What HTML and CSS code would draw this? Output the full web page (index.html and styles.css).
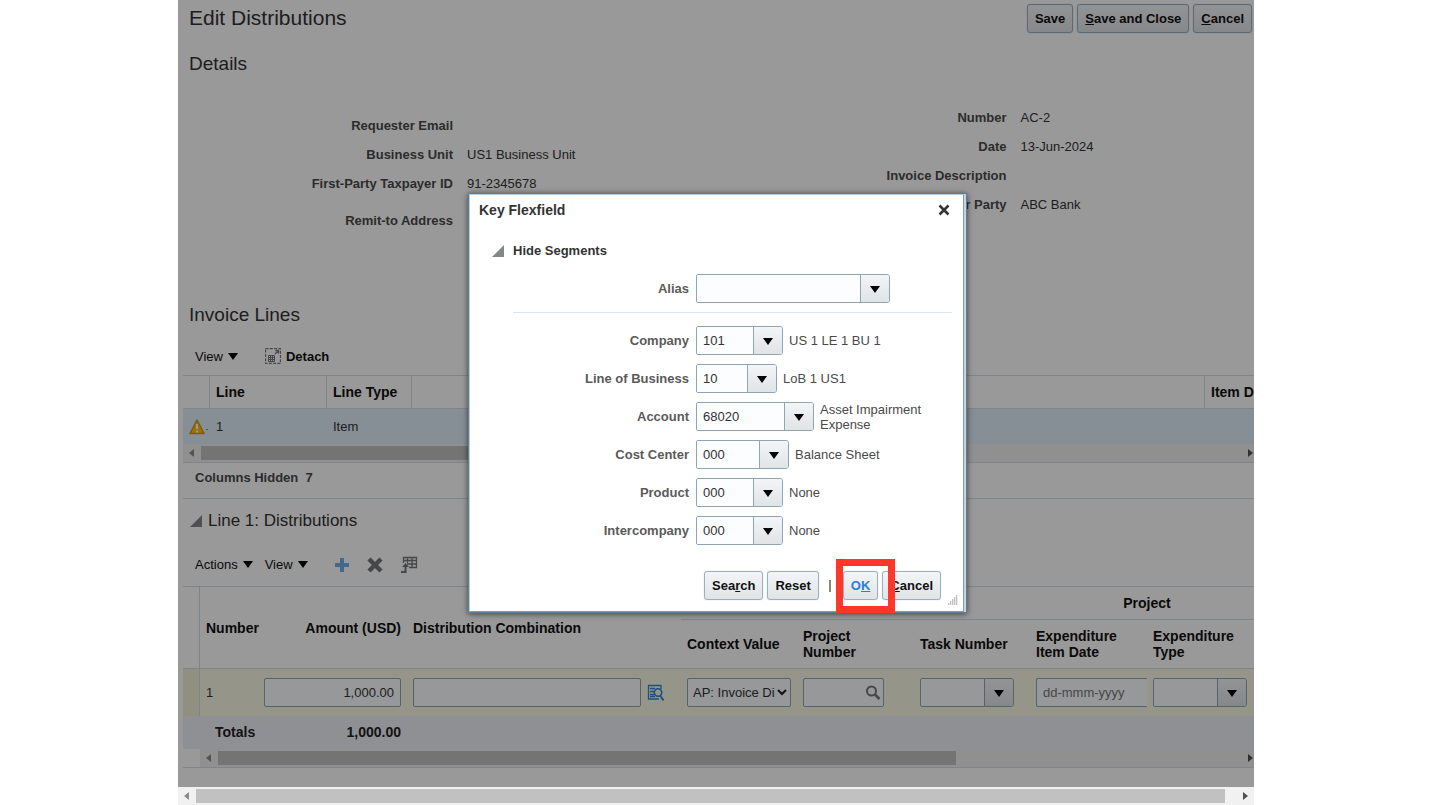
FILE: index.html
```html
<!DOCTYPE html>
<html lang="en">

<head>
    <meta charset="UTF-8">
    <meta name="viewport" content="width=device-width, initial-scale=1.0">
    <title>Edit Distributions</title>
    <link rel="stylesheet" href="styles.css">
</head>

<body>
    <svg class="sprite" aria-hidden="true">
        <symbol id="caret" viewBox="0 0 10 7"><path d="M0 0h10L5 7z" /></symbol>
        <symbol id="arrow-left" viewBox="0 0 5 8"><path d="M5 0v8L0 4z" /></symbol>
        <symbol id="arrow-right" viewBox="0 0 5 8"><path d="M0 0v8l5-4z" /></symbol>
        <symbol id="disclosure" viewBox="0 0 12 12"><path d="M12 0v12H0z" /></symbol>
    </svg>

    <div class="app">
        <div class="page">
            <header class="title-bar">
                <h1>Edit Distributions</h1>
                <div class="title-buttons">
                    <button type="button" class="btn">Save</button>
                    <button type="button" class="btn"><u>S</u>ave and Close</button>
                    <button type="button" class="btn"><u>C</u>ancel</button>
                </div>
            </header>

            <h2 class="details-title">Details</h2>
            <div class="details">
                <dl class="info info-left">
                    <dt>Requester Email</dt>
                    <dd></dd>
                    <dt>Business Unit</dt>
                    <dd>US1 Business Unit</dd>
                    <dt>First-Party Taxpayer ID</dt>
                    <dd>91-2345678</dd>
                    <dt class="tall">Remit-to Address</dt>
                    <dd class="tall"></dd>
                </dl>
                <dl class="info info-right">
                    <dt>Number</dt>
                    <dd>AC-2</dd>
                    <dt>Date</dt>
                    <dd>13-Jun-2024</dd>
                    <dt>Invoice Description</dt>
                    <dd></dd>
                    <dt>Supplier or Party</dt>
                    <dd>ABC Bank</dd>
                </dl>
            </div>

            <section class="lines">
                <h2>Invoice Lines</h2>
                <div class="toolbar lines-toolbar">
                    <button type="button" class="menu-btn">View <svg class="caret"><use href="#caret" /></svg></button>
                    <button type="button" class="menu-btn detach">
                        <svg width="16" height="16" viewBox="0 0 16 16" fill="none" stroke="#73777a">
                            <path d="M.5 .5h15v15H.5z" stroke-width="1.300" stroke-dasharray="3 1.3" />
                            <path d="M3.500 7.500h6v6h-6zM3.500 9.500h6M3.500 11.500h6M5.500 7.500v6M7.500 7.500v6" />
                            <path d="M10 6l3-3M10.500 2.500h3v3" stroke-width="1.300" />
                        </svg>
                        <b>Detach</b>
                    </button>
                </div>
                <table class="grid lines-grid">
                    <colgroup>
                        <col class="c-status">
                        <col class="c-line">
                        <col class="c-type">
                        <col>
                        <col class="c-item">
                    </colgroup>
                    <thead>
                        <tr>
                            <th></th>
                            <th>Line</th>
                            <th>Line Type</th>
                            <th></th>
                            <th class="clip">Item De</th>
                        </tr>
                    </thead>
                    <tbody>
                        <tr>
                            <td class="status">
                                <svg width="20" height="16" viewBox="0 0 20 16">
                                    <path d="M8 1L15 14.500H1z" fill="#ffc20e" stroke="#d99600" stroke-width="1.500" stroke-linejoin="round" />
                                    <path d="M8 5v5M8 11.500v2" stroke="#fff" stroke-width="2" />
                                    <path d="M17 10.500h2" stroke="#888" />
                                </svg>
                            </td>
                            <td>1</td>
                            <td>Item</td>
                            <td></td>
                            <td></td>
                        </tr>
                    </tbody>
                </table>
                <div class="scrollbar lines-scroll">
                    <svg class="arrow faded"><use href="#arrow-left" /></svg>
                    <div class="thumb"></div>
                    <svg class="arrow arrow-end"><use href="#arrow-right" /></svg>
                </div>
                <p class="hidden-columns">Columns Hidden&nbsp; 7</p>
            </section>

            <section class="distributions">
                <h3><svg class="disclosure"><use href="#disclosure" /></svg>Line 1: Distributions</h3>
                <div class="toolbar">
                    <button type="button" class="menu-btn">Actions <svg class="caret"><use href="#caret" /></svg></button>
                    <button type="button" class="menu-btn">View <svg class="caret"><use href="#caret" /></svg></button>
                    <button type="button" class="icon-btn add" aria-label="Add Row">
                        <svg width="16" height="16" viewBox="0 0 16 16"><path d="M6 1h4v5h5v4h-5v5H6v-5H1V6h5z" fill="#6fb0e8" /></svg>
                    </button>
                    <button type="button" class="icon-btn" aria-label="Delete">
                        <svg width="16" height="16" viewBox="0 0 16 16"><path d="M2 2l12 12M14 2L2 14" stroke="#73777a" stroke-width="4.500" /></svg>
                    </button>
                    <button type="button" class="icon-btn" aria-label="Detach Rows">
                        <svg width="18" height="18" viewBox="0 0 18 18" fill="none" stroke="#73777a">
                            <path d="M3.500 7V1.500h13v10H9M3.500 4.500h13M7 8h9.500M7.500 1.500V7M12 1.500v10" stroke-width="1.300" />
                            <path d="M1 16h4.500V10" stroke-width="2" />
                            <path d="M2 11l3.500-4L9 11z" fill="#73777a" stroke="none" />
                        </svg>
                    </button>
                </div>
                <table class="grid dist-grid">
                    <colgroup>
                        <col class="c-gutter">
                        <col class="c-number">
                        <col class="c-amount">
                        <col class="c-combination">
                        <col class="c-narrow">
                        <col class="c-field">
                        <col class="c-narrow">
                        <col class="c-field">
                        <col>
                    </colgroup>
                    <thead>
                        <tr class="group-row">
                            <th rowspan="2" class="gutter"></th>
                            <th rowspan="2">Number</th>
                            <th rowspan="2" class="num">Amount (USD)</th>
                            <th rowspan="2">Distribution Combination</th>
                            <th colspan="3" class="group"></th>
                            <th colspan="2" class="group project">Project</th>
                        </tr>
                        <tr class="column-row">
                            <th>Context Value</th>
                            <th>Project<br>Number</th>
                            <th>Task Number</th>
                            <th>Expenditure<br>Item Date</th>
                            <th>Expenditure<br>Type</th>
                        </tr>
                    </thead>
                    <tbody>
                        <tr>
                            <td class="gutter"></td>
                            <td>1</td>
                            <td><input type="text" class="field num" value="1,000.00" aria-label="Amount (USD)"></td>
                            <td>
                                <div class="combination">
                                    <input type="text" class="field" aria-label="Distribution Combination">
                                    <button type="button" class="icon-btn" aria-label="Select Combination">
                                        <svg width="18" height="18" viewBox="0 0 18 18" fill="none" stroke="#2e87cf">
                                            <path d="M1 1.500h13M1.500 1v14.500M1 15h11M14 1v4M3 4.500h5M3 7.500h4M3 10.500h4M3 12.500h5" stroke-width="1.300" />
                                            <circle cx="11" cy="8.500" r="3.700" stroke-width="1.600" />
                                            <path d="M13.500 12l3 4.500" stroke-width="2" />
                                        </svg>
                                    </button>
                                </div>
                            </td>
                            <td>
                                <div class="select-wrap">
                                    <select class="field" aria-label="Context Value">
                                        <option>AP: Invoice Di</option>
                                    </select>
                                    <svg width="10" height="7" viewBox="0 0 10 7"><path d="M1 1l4 4 4-4" fill="none" stroke="#222" stroke-width="2" /></svg>
                                </div>
                            </td>
                            <td>
                                <div class="search-box">
                                    <input type="text" aria-label="Project Number">
                                    <button type="button" class="icon-btn" aria-label="Search Project Number">
                                        <svg width="16" height="16" viewBox="0 0 16 16" fill="none" stroke="#73777a">
                                            <circle cx="6.500" cy="6" r="4.500" stroke-width="2" />
                                            <path d="M10 9.500l4.500 4.500" stroke-width="2.500" />
                                        </svg>
                                    </button>
                                </div>
                            </td>
                            <td>
                                <div class="combo w-task">
                                    <input type="text" aria-label="Task Number">
                                    <button type="button" aria-label="Task Number list"><svg class="caret"><use href="#caret" /></svg></button>
                                </div>
                            </td>
                            <td class="date-cell"><input type="text" class="field date" placeholder="dd-mmm-yyyy" aria-label="Expenditure Item Date"></td>
                            <td>
                                <div class="combo w-task">
                                    <input type="text" aria-label="Expenditure Type">
                                    <button type="button" aria-label="Expenditure Type list"><svg class="caret"><use href="#caret" /></svg></button>
                                </div>
                            </td>
                        </tr>
                    </tbody>
                    <tfoot>
                        <tr>
                            <td></td>
                            <td class="totals">Totals</td>
                            <td class="num">1,000.00</td>
                            <td colspan="6"></td>
                        </tr>
                    </tfoot>
                </table>
                <div class="scroll-row">
                    <div class="scrollbar dist-scroll">
                        <svg class="arrow faded"><use href="#arrow-left" /></svg>
                        <div class="thumb"></div>
                        <svg class="arrow arrow-end"><use href="#arrow-right" /></svg>
                    </div>
                </div>
            </section>

            <!-- Modal layer -->
            <div class="overlay">
                <div class="dialog" role="dialog" aria-labelledby="dialog-title">
                    <div class="dialog-body">
                        <div class="dialog-head">
                            <h4 id="dialog-title">Key Flexfield</h4>
                            <button type="button" class="icon-btn" aria-label="Close">
                                <svg width="12" height="12" viewBox="0 0 12 12"><path d="M1.500 1.500l9 9M10.500 1.500l-9 9" stroke="#333" stroke-width="2.500" /></svg>
                            </button>
                        </div>
                        <button type="button" class="segments-toggle"><svg class="disclosure"><use href="#disclosure" /></svg>Hide Segments</button>

                        <div class="segment">
                            <label for="alias">Alias</label>
                            <div class="combo w-alias">
                                <input type="text" id="alias">
                                <button type="button" aria-label="Alias list"><svg class="caret"><use href="#caret" /></svg></button>
                            </div>
                        </div>
                        <hr>
                        <div class="segment">
                            <label for="company">Company</label>
                            <div class="combo w-company">
                                <input type="text" id="company" value="101">
                                <button type="button" aria-label="Company list"><svg class="caret"><use href="#caret" /></svg></button>
                            </div>
                            <span>US 1 LE 1 BU 1</span>
                        </div>
                        <div class="segment">
                            <label for="lob">Line of Business</label>
                            <div class="combo w-lob">
                                <input type="text" id="lob" value="10">
                                <button type="button" aria-label="Line of Business list"><svg class="caret"><use href="#caret" /></svg></button>
                            </div>
                            <span>LoB 1 US1</span>
                        </div>
                        <div class="segment">
                            <label for="account">Account</label>
                            <div class="combo w-account">
                                <input type="text" id="account" value="68020">
                                <button type="button" aria-label="Account list"><svg class="caret"><use href="#caret" /></svg></button>
                            </div>
                            <span>Asset Impairment<br>Expense</span>
                        </div>
                        <div class="segment">
                            <label for="cost-center">Cost Center</label>
                            <div class="combo w-cost">
                                <input type="text" id="cost-center" value="000">
                                <button type="button" aria-label="Cost Center list"><svg class="caret"><use href="#caret" /></svg></button>
                            </div>
                            <span>Balance Sheet</span>
                        </div>
                        <div class="segment">
                            <label for="product">Product</label>
                            <div class="combo w-company">
                                <input type="text" id="product" value="000">
                                <button type="button" aria-label="Product list"><svg class="caret"><use href="#caret" /></svg></button>
                            </div>
                            <span>None</span>
                        </div>
                        <div class="segment">
                            <label for="intercompany">Intercompany</label>
                            <div class="combo w-company">
                                <input type="text" id="intercompany" value="000">
                                <button type="button" aria-label="Intercompany list"><svg class="caret"><use href="#caret" /></svg></button>
                            </div>
                            <span>None</span>
                        </div>

                        <div class="dialog-foot">
                            <button type="button" class="btn">Sea<u>r</u>ch</button>
                            <button type="button" class="btn">Reset</button>
                            <span class="divider"></span>
                            <span class="ok-wrap">
                                <button type="button" class="btn ok">O<u>K</u></button>
                                <span class="highlight"></span>
                            </span>
                            <button type="button" class="btn"><u>C</u>ancel</button>
                        </div>
                        <svg class="grip" width="11" height="11" viewBox="0 0 11 11">
                            <path d="M1 10h10M3 8h8M5 6h6M7 4h4M9 2h2" stroke="#aaa" stroke-width="1.300" stroke-dasharray="1.300 .7" />
                        </svg>
                    </div>
                </div>
            </div>
        </div>

        <div class="scrollbar page-scroll">
            <svg class="arrow faded"><use href="#arrow-left" /></svg>
            <div class="thumb"></div>
            <svg class="arrow arrow-end"><use href="#arrow-right" /></svg>
        </div>
    </div>
</body>

</html>
```

FILE: styles.css
```css
* {
    box-sizing: border-box;
}

body {
    margin: 0;
    padding: 0 178px;
    background: #fff;
    color: #333;
    font-family: "Liberation Sans", Arial, sans-serif;
    font-size: 13px;
    line-height: 15px;
}

h1,
h2,
h3,
h4,
p,
dl,
dd {
    margin: 0;
    font-weight: normal;
}

button,
input,
select {
    font: inherit;
    color: inherit;
}

svg {
    display: block;
    flex: none;
}

.sprite {
    position: absolute;
    width: 0;
    height: 0;
}

.page {
    position: relative;
    padding: 0 0 19px 5px;
    overflow: hidden;
}

/* Headings */
.title-bar {
    display: flex;
    justify-content: space-between;
    align-items: center;
    height: 36px;
    padding: 0 2px 0 6px;
}

h1 {
    font-size: 21px;
    line-height: 28px;
}

h2 {
    padding-left: 6px;
    font-size: 19px;
    line-height: 28px;
}

h3 {
    display: flex;
    align-items: center;
    gap: 6px;
    padding-left: 7px;
    font-size: 17px;
    line-height: 44px;
}

.details-title {
    margin-top: 14px;
}

.title-buttons {
    display: flex;
    gap: 4px;
}

/* Buttons */
.btn {
    height: 29px;
    padding: 0 7px;
    border: 1px solid #9aafbf;
    border-radius: 3px;
    background: linear-gradient(#f3f5f7, #dfe4e7);
    box-shadow: 0 0 1px #9aafbf;
    color: #111;
    font-weight: bold;
}

.icon-btn,
.menu-btn,
.segments-toggle {
    display: flex;
    align-items: center;
    padding: 0;
    border: 0;
    background: none;
}

.menu-btn {
    gap: 5px;
    color: #111;
}

.caret {
    width: 10px;
    height: 7px;
    fill: #000;
}

.disclosure {
    width: 12px;
    height: 12px;
    fill: #82888c;
}

/* Details */
.details {
    display: grid;
    grid-template-columns: 1fr 1fr;
    align-items: start;
    margin-top: 25px;
}

.info {
    display: grid;
    column-gap: 14px;
    line-height: 29px;
    grid-auto-rows: minmax(29px, auto);
}

.info-left {
    grid-template-columns: 270px 1fr;
    margin-top: 8px;
}

.info-right {
    grid-template-columns: 288px 1fr;
}

.info dt {
    font-weight: bold;
    text-align: right;
    color: #4a4a4a;
}

.info .tall {
    padding-top: 8px;
}

.lines {
    margin-top: 66px;
}

/* Toolbars */
.toolbar {
    display: flex;
    align-items: center;
    gap: 12px;
    height: 43px;
    padding-left: 12px;
}

.lines-toolbar {
    gap: 27px;
    height: 46px;
    padding-top: 8px;
}

.toolbar .add {
    margin-left: 14px;
}

.toolbar .icon-btn + .icon-btn {
    margin-left: 5px;
}

/* Tables */
.grid {
    width: 100%;
    table-layout: fixed;
    border-collapse: separate;
    border-spacing: 0;
    border-top: 1px solid #d3dee5;
}

.grid th,
.grid td {
    padding: 0 6px;
    text-align: left;
}

.grid th {
    border-bottom: 1px solid #d3dee5;
    color: #111;
    font-size: 14px;
    line-height: 16px;
}

.grid .num {
    text-align: right;
}

.c-status { width: 27px; }
.c-line { width: 117px; }
.c-type { width: 85px; }
.c-item { width: 49px; }
.c-gutter { width: 17px; }
.c-number { width: 58px; }
.c-amount { width: 149px; }
.c-combination { width: 274px; }
.c-narrow { width: 116px; }
.c-field { width: 117px; }

.lines-grid th {
    height: 33px;
    border-right: 1px solid #d3dee5;
}

.lines-grid th:last-child {
    border-right: 0;
}

.lines-grid .clip {
    padding-right: 0;
    overflow: hidden;
    white-space: nowrap;
}

.lines-grid td {
    height: 35px;
    background: #e1eefa;
}

.lines-grid .status {
    padding-right: 0;
}

.hidden-columns {
    height: 36px;
    padding: 7px 12px;
    border-bottom: 1px solid #d3dee5;
    color: #4a4a4a;
    font-weight: bold;
}

.dist-grid .group-row th {
    height: 33px;
}

.dist-grid .column-row th {
    height: 49px;
}

.dist-grid .group.project {
    padding-left: 16px;
    text-align: center;
}

.dist-grid .gutter {
    border-right: 1px solid #d3dee5;
}

.dist-grid tbody td {
    height: 47px;
    background: #faf8e6;
}

.dist-grid tbody .gutter {
    background: #eff0d5;
}

.dist-grid tbody .date-cell {
    padding-right: 0;
}

.dist-grid tfoot td {
    height: 33px;
    background: #eef1f6;
    color: #222;
    font-size: 14px;
    font-weight: bold;
}

.dist-grid tfoot .totals {
    padding: 0 0 0 15px;
}

/* Fields */
.field,
.search-box {
    display: block;
    width: 100%;
    height: 29px;
    padding: 0 6px;
    border: 1px solid #8fa5b4;
    border-radius: 2px;
    background: #fbfdff;
}

.field::placeholder {
    color: #777;
}

.field.date {
    border-right: 0;
    border-radius: 2px 0 0 2px;
}

.combination {
    display: flex;
    gap: 6px;
    padding-right: 10px;
}

.select-wrap {
    position: relative;
}

.select-wrap .field {
    appearance: none;
    padding: 0 14px 0 5px;
}

.select-wrap svg {
    position: absolute;
    top: 11px;
    right: 4px;
    pointer-events: none;
}

.search-box {
    display: flex;
    width: 81px;
    padding: 0 2px 0 6px;
}

.search-box input {
    flex: 1;
    min-width: 0;
    padding: 0;
    border: 0;
    background: none;
}

.combo {
    display: flex;
    flex: none;
    height: 29px;
    border: 1px solid #8fa5b4;
    border-radius: 2px 3px 3px 2px;
    overflow: hidden;
}

.combo input {
    flex: 1;
    min-width: 0;
    padding: 0 6px;
    border: 0;
    background: #fbfdff;
}

.combo button {
    display: flex;
    align-items: center;
    justify-content: center;
    width: 29px;
    padding: 2px 0 0;
    border: 0;
    border-left: 1px solid #8fa5b4;
    background: linear-gradient(#f3f5f7, #dfe4e7);
}

.w-task { width: 94px; }
.w-alias { width: 194px; }
.w-company { width: 87px; }
.w-lob { width: 81px; }
.w-account { width: 118px; }
.w-cost { width: 93px; }

/* Scrollbars */
.scrollbar {
    display: flex;
    align-items: center;
    background: #f1f1f1;
}

.scrollbar .arrow {
    width: 5px;
    height: 8px;
    margin: 0 7px 0 6px;
    fill: #505050;
}

.scrollbar .faded {
    fill: #8a8a8a;
}

.scrollbar .arrow-end {
    margin: 0 1px 0 auto;
}

.thumb {
    height: 14px;
    background: #c1c1c1;
}

.lines-scroll {
    height: 19px;
    border-bottom: 1px solid #d3dee5;
}

.lines-scroll .thumb {
    width: 60%;
}

.scroll-row {
    padding-left: 17px;
    border-bottom: 1px solid #d3dee5;
}

.dist-scroll {
    height: 18px;
}

.dist-scroll .thumb {
    width: 70%;
}

.page-scroll {
    height: 18px;
}

.page-scroll .thumb {
    flex: 1;
}

.page-scroll .arrow-end {
    margin: 0 6px 0 18px;
}

/* Dialog */
.overlay {
    position: absolute;
    inset: 0;
    display: flex;
    justify-content: center;
    align-items: flex-start;
    padding: 193px 0 0 3px;
    background: rgba(0, 0, 0, 0.4);
}

.dialog {
    width: 499px;
    padding-right: 2px;
    border: 1px solid #5f7f98;
    background: #c9d2dc;
    box-shadow: 0 1px 6px rgba(0, 0, 0, 0.6);
}

.dialog-body {
    position: relative;
    padding: 7px 11px 11px 9px;
    border: 1px solid #b5c9da;
    border-right-color: #7f9bb0;
    border-bottom-color: #7f9bb0;
    background: #fff;
}

.dialog-head {
    display: flex;
    justify-content: space-between;
    align-items: center;
    padding-right: 2px;
}

.dialog-head h4 {
    font-size: 14px;
    font-weight: bold;
    line-height: 16px;
}

.segments-toggle {
    gap: 9px;
    margin: 24px 0 14px 13px;
    font-weight: bold;
    line-height: 18px;
}

.segment {
    display: flex;
    align-items: center;
    gap: 6px;
    height: 29px;
    margin-bottom: 9px;
}

.segment label {
    width: 211px;
    padding-right: 1px;
    color: #5a5a5a;
    font-weight: bold;
    text-align: right;
}

.segment span {
    color: #4a4a4a;
}

hr {
    height: 1px;
    margin: 0 0 13px 34px;
    border: 0;
    background: #dbe6ee;
}

.dialog-foot {
    display: flex;
    align-items: center;
    justify-content: flex-end;
    gap: 4px;
    margin-top: 26px;
    padding-right: 11px;
}

.divider {
    width: 2px;
    height: 12px;
    margin: 0 8px 0 6px;
    background: #8d8778;
}

.ok-wrap {
    position: relative;
}

.btn.ok {
    color: #2a7fd4;
}

/* red marker around the OK button */
.highlight {
    position: absolute;
    inset: -12px -17px -13px -7px;
    z-index: 1;
    border: 7px solid #ff372b;
    pointer-events: none;
}

.grip {
    position: absolute;
    right: 5px;
    bottom: 6px;
}
```
